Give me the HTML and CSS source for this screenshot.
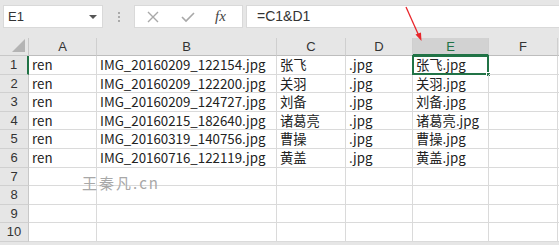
FILE: index.html
```html
<!DOCTYPE html>
<html>
<head>
<meta charset="utf-8">
<link rel="stylesheet" href="styles.css">
</head>
<body>
<div class="app">
  <div class="fbar">
    <div class="namebox"><span>E1</span><span class="caret"></span></div>
    <div class="dots"><i></i><i></i><i></i></div>
    <div class="btns">
      <svg class="x" width="14" height="14" viewBox="0 0 14 14"><path d="M2 2L12 12M12 2L2 12" stroke="#a8a8a8" stroke-width="1.4" fill="none"/></svg>
      <svg class="ok" width="16" height="14" viewBox="0 0 16 14"><path d="M2 7L6 11L14 3" stroke="#a8a8a8" stroke-width="1.6" fill="none"/></svg>
      <span class="fx">fx</span>
    </div>
    <div class="formula">=C1&amp;D1</div>
  </div>
  <div class="sheet">
    <div class="corner"><span class="tri"></span></div>
    <div class="ch">A</div><div class="ch">B</div><div class="ch">C</div><div class="ch">D</div><div class="ch sel">E</div><div class="ch">F</div><div class="ch rest"></div>

    <div class="rh act">1</div><div class="c">ren</div><div class="c">IMG_20160209_122154.jpg</div><div class="c">张飞</div><div class="c">.jpg</div><div class="c active">张飞.jpg<span class="handle"></span></div><div class="c"></div><div class="c rest"></div>
    <div class="rh">2</div><div class="c">ren</div><div class="c">IMG_20160209_122200.jpg</div><div class="c">关羽</div><div class="c">.jpg</div><div class="c">关羽.jpg</div><div class="c"></div><div class="c rest"></div>
    <div class="rh">3</div><div class="c">ren</div><div class="c">IMG_20160209_124727.jpg</div><div class="c">刘备</div><div class="c">.jpg</div><div class="c">刘备.jpg</div><div class="c"></div><div class="c rest"></div>
    <div class="rh">4</div><div class="c">ren</div><div class="c">IMG_20160215_182640.jpg</div><div class="c">诸葛亮</div><div class="c">.jpg</div><div class="c">诸葛亮.jpg</div><div class="c"></div><div class="c rest"></div>
    <div class="rh">5</div><div class="c">ren</div><div class="c">IMG_20160319_140756.jpg</div><div class="c">曹操</div><div class="c">.jpg</div><div class="c">曹操.jpg</div><div class="c"></div><div class="c rest"></div>
    <div class="rh">6</div><div class="c">ren</div><div class="c">IMG_20160716_122119.jpg</div><div class="c">黄盖</div><div class="c">.jpg</div><div class="c">黄盖.jpg</div><div class="c"></div><div class="c rest"></div>
    <div class="rh">7</div><div class="c"></div><div class="c"></div><div class="c"></div><div class="c"></div><div class="c"></div><div class="c"></div><div class="c rest"></div>
    <div class="rh">8</div><div class="c"></div><div class="c"></div><div class="c"></div><div class="c"></div><div class="c"></div><div class="c"></div><div class="c rest"></div>
    <div class="rh">9</div><div class="c"></div><div class="c"></div><div class="c"></div><div class="c"></div><div class="c"></div><div class="c"></div><div class="c rest"></div>
    <div class="rh">10</div><div class="c"></div><div class="c"></div><div class="c"></div><div class="c"></div><div class="c"></div><div class="c"></div><div class="c rest"></div>
    <div class="watermark">王秦凡.cn</div>
  </div>
  <svg class="arrow" width="559" height="60" viewBox="0 0 559 60">
    <path d="M406 7L419 36" stroke="#e8262b" stroke-width="1.3" fill="none"/>
    <path d="M421.5 41L415.5 34.5L421 32.5Z" fill="#e8262b"/>
  </svg>
</div>
</body>
</html>
```

FILE: styles.css
```css
* { box-sizing: border-box; }
html, body { margin: 0; padding: 0; }
body {
  width: 559px; height: 245px; overflow: hidden;
  background: #e6e6e6;
  font-family: "Noto Sans CJK SC", "Noto Sans", sans-serif;
  color: #222;
}
.app { position: relative; width: 559px; height: 245px; }
.fbar {
  height: 38px;
  display: flex;
  align-items: flex-start;
  padding-top: 5px;
  padding-left: 3px;
}
.namebox {
  width: 100px; height: 23px;
  background: #fff;
  border: 1px solid #d9d9d9;
  display: flex; align-items: center; justify-content: space-between;
  padding: 0 5px 0 4px;
  font-size: 13px; color: #333;
  font-family: "Liberation Sans", sans-serif;
}
.caret {
  width: 0; height: 0;
  border-left: 4px solid transparent; border-right: 4px solid transparent;
  border-top: 4px solid #555;
}
.dots {
  width: 31px; height: 23px;
  display: flex; flex-direction: column; align-items: center; justify-content: center; gap: 2px;
}
.dots i { width: 2px; height: 2px; background: #aaa; display: block; }
.btns {
  width: 109px; height: 23px;
  background: #fff; border: 1px solid #d9d9d9;
  display: flex; align-items: center;
  padding-left: 11px;
}
.btns .x { margin-right: 20px; }
.btns .ok { margin-right: 19px; }
.fx {
  font-family: "Liberation Serif", serif; font-style: italic;
  font-size: 15px; color: #444;
}
.formula {
  margin-left: 3px;
  flex: 1; height: 23px;
  background: #fff; border: 1px solid #d9d9d9; border-right: none;
  font-size: 14px; color: #333;
  font-family: "Liberation Sans", sans-serif;
  padding-left: 10px; line-height: 21px;
}
.sheet {
  position: relative;
  display: grid;
  grid-template-columns: 29px 68px 180px 69px 67px 76px 69px 1fr;
  grid-template-rows: 18px repeat(10, 18.6px);
  background: #fff;
}
.corner {
  background: #e6e6e6;
  border-right: 1px solid #c8c8c8; border-bottom: 1px solid #c8c8c8;
  position: relative;
}
.tri {
  position: absolute; right: 3px; bottom: 3px;
  width: 0; height: 0;
  border-left: 13px solid transparent;
  border-bottom: 13px solid #b4b4b4;
}
.ch {
  background: #e6e6e6;
  border-right: 1px solid #cfcfcf; border-bottom: 1px solid #bdbdbd;
  text-align: center; font-size: 13px; line-height: 17px; color: #333;
  font-family: "Liberation Sans", sans-serif;
}
.ch.sel { background: #d2d2d2; border-bottom: 2px solid #217346; color: #217346; }
.ch.rest { border-right: none; }
.rh {
  background: #e6e6e6;
  border-right: 1px solid #c8c8c8; border-bottom: 1px solid #d0d0d0;
  text-align: center; font-size: 13px; line-height: 18px; color: #333;
  font-family: "Liberation Sans", sans-serif;
}
.rh.act { border-right: 2px solid #217346; }
.c {
  border-right: 1px solid #dadada; border-bottom: 1px solid #dadada;
  font-size: 13.3px; line-height: 18px; padding-left: 3px;
  white-space: nowrap; overflow: visible; color: #222;
  position: relative;
}
.c.rest { border-right: none; }
.c.active {
  border: 2px solid #217346;
  margin: -1px 0 0 -1px;
  padding-left: 2px; line-height: 16px;
}
.handle {
  position: absolute; right: -4px; bottom: -4px;
  width: 5px; height: 5px; background: #217346; border: 1px solid #fff;
}
.watermark {
  position: absolute; left: 82px; top: 134px;
  font-size: 15px; color: #a8a8a8; letter-spacing: 2px;
  font-family: "Noto Sans CJK SC", sans-serif;
}
.arrow { position: absolute; left: 0; top: 0; pointer-events: none; }
```
